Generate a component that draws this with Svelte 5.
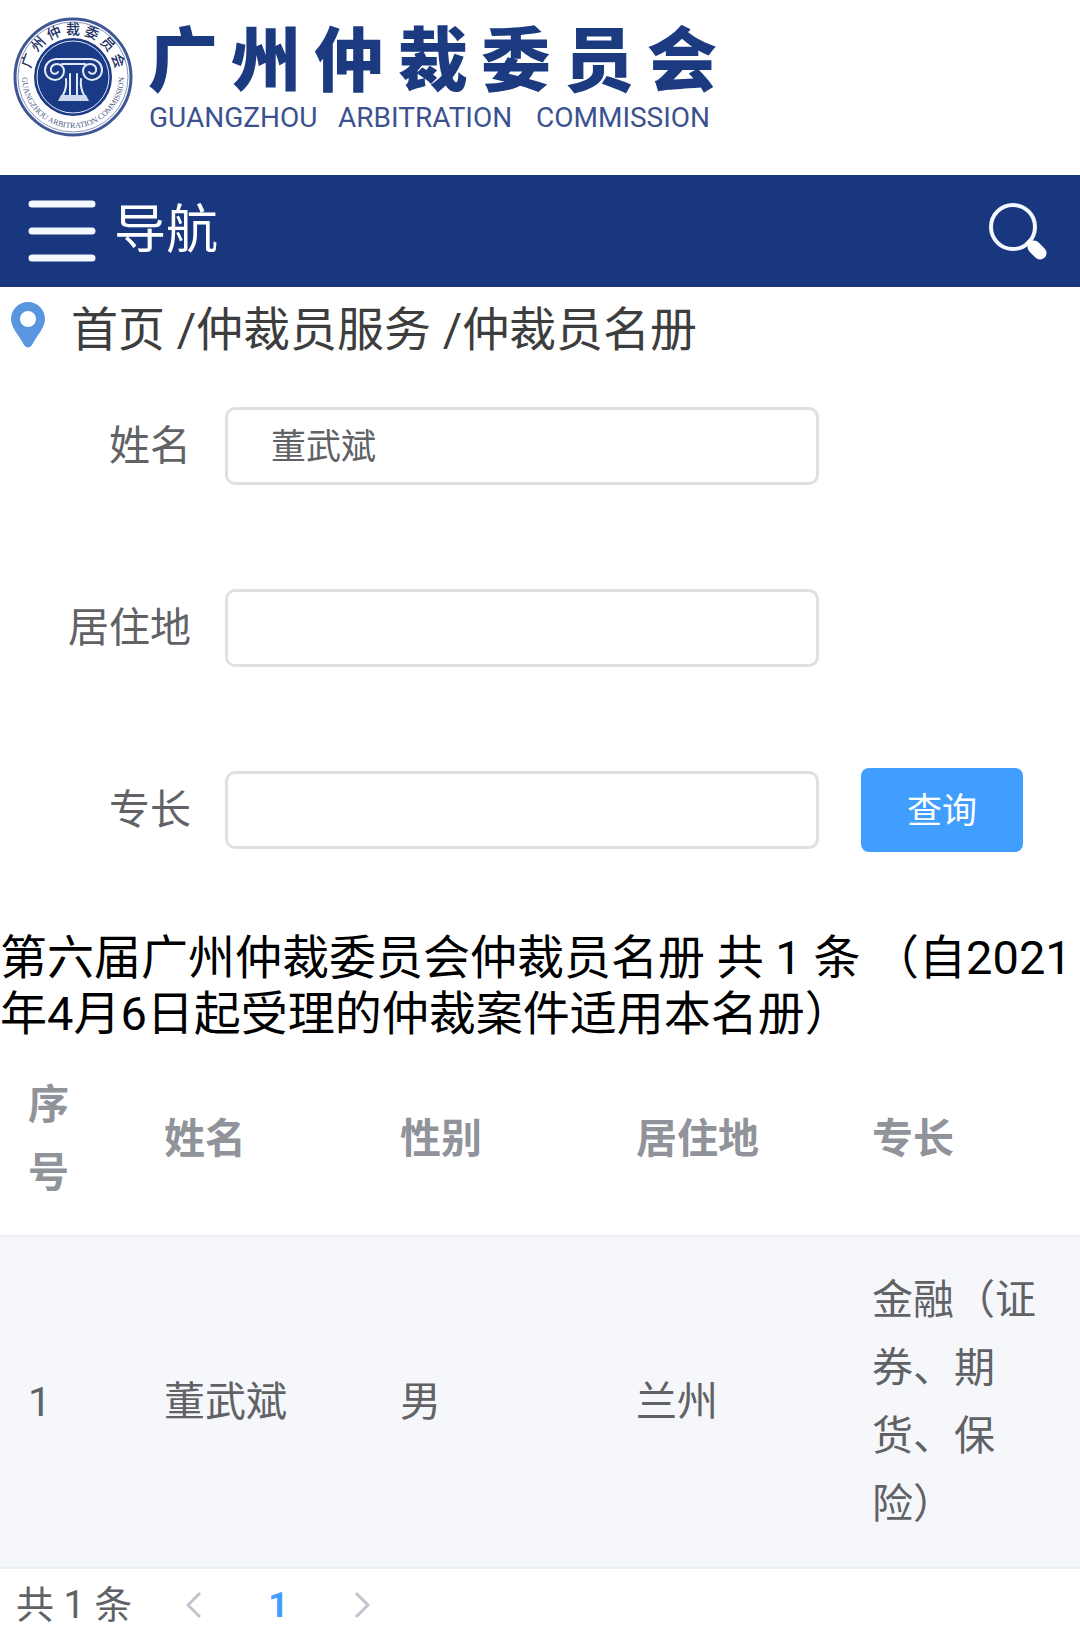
<script lang="ts">
  type Arbitrator = {
    name: string;
    gender: string;
    residence: string;
    specialty: string;
  };

  let name = $state('董武斌');
  let residence = $state('');
  let specialty = $state('');

  const crumbs = ['首页', '仲裁员服务', '仲裁员名册'];
  const columns = ['序号', '姓名', '性别', '居住地', '专长'];
  const arbitrators: Arbitrator[] = [
    { name: '董武斌', gender: '男', residence: '兰州', specialty: '金融（证券、期货、保险）' }
  ];
</script>

<div class="page">
  <header class="site-header">
    <a class="brand" href="#home" aria-label="广州仲裁委员会">
      <svg class="logo" viewBox="0 0 720 144">
        <defs>
          <path id="ring-top" d="M 31.2 87 A 43 43 0 1 1 114.8 87" />
          <path id="ring-bottom" d="M 23 67 A 51 51 0 1 0 123 67" />
        </defs>
        <circle cx="73" cy="77" r="58" fill="#fff" stroke="#3f5795" stroke-width="3" />
        <circle cx="73" cy="77" r="55" fill="none" stroke="#8796c0" stroke-width="1" />
        <circle cx="73" cy="77" r="39" fill="#1b3a85" />
        <circle cx="73" cy="77" r="36" fill="none" stroke="#dfe6f5" stroke-width="1" />
        <text class="ring-cn">
          <textPath href="#ring-top" startOffset="50%" text-anchor="middle">广 州 仲 裁 委 员 会</textPath>
        </text>
        <text class="ring-en">
          <textPath href="#ring-bottom" startOffset="50%" text-anchor="middle">GUANGZHOU ARBITRATION COMMISSION</textPath>
        </text>
        <g fill="none" stroke="#e3eaf7" stroke-width="2" stroke-linecap="round">
          <path d="M 57 59 H 90 C 97 59 102 64 102 70 C 102 76 97 80 92 80 C 87 80 83 76 83 71 C 83 67 86 64 90 64 C 94 64 97 67 96 71 C 95 74 91 75 89 72" />
          <path d="M 90 59 H 57 C 50 59 45 64 45 70 C 45 76 50 80 55 80 C 60 80 64 76 64 71 C 64 67 61 64 57 64 C 53 64 50 67 51 71 C 52 74 56 75 58 72" />
          <path d="M 62 64 H 85" />
          <path d="M 66 79 Q 67 88 63 95 M 70 74 V 95 M 77 74 V 95 M 81 79 Q 80 88 84 95" />
        </g>
        <path d="M 61 95 H 86 L 89 101 H 58 Z" fill="#cfd9ee" />
        <text class="title" x="183 266 349 433 516 599 682" y="86">广州仲裁委员会</text>
        <text class="subtitle" y="127">
          <tspan x="149">GUANGZHOU</tspan>
          <tspan x="338">ARBITRATION</tspan>
          <tspan x="536">COMMISSION</tspan>
        </text>
      </svg>
    </a>
  </header>

  <nav class="nav-bar">
    <button class="menu" type="button">
      <svg width="68" height="62" viewBox="0 0 68 62" aria-hidden="true">
        <path d="M 4 4 H 64 M 4 31 H 64 M 4 58 H 64" stroke="#f4f8ff" stroke-width="7" stroke-linecap="round" />
      </svg>
      <span>导航</span>
    </button>
    <button class="search" type="button" aria-label="搜索">
      <svg width="60" height="62" viewBox="0 0 60 62" fill="none" aria-hidden="true">
        <circle cx="25" cy="27" r="22" stroke="#f4f8ff" stroke-width="4" />
        <path d="M 46 47 L 52 53" stroke="#fff" stroke-width="13" stroke-linecap="round" />
        <path d="M 39 41 L 46 48" stroke="#fff" stroke-width="5" />
      </svg>
    </button>
  </nav>

  <nav class="breadcrumb" aria-label="当前位置">
    <svg width="34" height="46" viewBox="0 0 34 46" aria-hidden="true">
      <path
        fill="#5a96e0"
        fill-rule="evenodd"
        d="M 17 0 C 7 0 0 8 0 17 C 0 26 8 33 13 43 Q 17 48 21 43 C 26 33 34 26 34 17 C 34 8 27 0 17 0 Z M 17 9 A 8 8 0 1 1 17 25 A 8 8 0 1 1 17 9 Z"
      />
    </svg>
    <p>
      {#each crumbs as crumb, i}{i > 0 ? ' /' : ''}<a href="#crumb-{i}">{crumb}</a>{/each}
    </p>
  </nav>

  <form class="filters" onsubmit={(event) => event.preventDefault()}>
    <label for="name">姓名</label>
    <input id="name" type="text" bind:value={name} />
    <label class="row-start" for="residence">居住地</label>
    <input id="residence" type="text" bind:value={residence} />
    <label class="row-start" for="specialty">专长</label>
    <input id="specialty" type="text" bind:value={specialty} />
    <button type="submit">查询</button>
  </form>

  <h1>第六届广州仲裁委员会仲裁员名册 共 {arbitrators.length} 条 （自2021年4月6日起受理的仲裁案件适用本名册）</h1>

  <table>
    <thead>
      <tr>
        {#each columns as column}
          <th scope="col">{column}</th>
        {/each}
      </tr>
    </thead>
    <tbody>
      {#each arbitrators as person, i}
        <tr>
          <td>{i + 1}</td>
          <td>{person.name}</td>
          <td>{person.gender}</td>
          <td>{person.residence}</td>
          <td>{person.specialty}</td>
        </tr>
      {/each}
    </tbody>
  </table>

  <footer class="pagination">
    <span>共 {arbitrators.length} 条</span>
    <button type="button" aria-label="上一页" disabled>
      <svg width="16" height="28" viewBox="0 0 16 28" aria-hidden="true">
        <path d="M 14 2 L 2 14 L 14 26" />
      </svg>
    </button>
    <button class="current" type="button" aria-current="page">1</button>
    <button type="button" aria-label="下一页" disabled>
      <svg width="16" height="28" viewBox="0 0 16 28" aria-hidden="true">
        <path d="M 2 2 L 14 14 L 2 26" />
      </svg>
    </button>
  </footer>
</div>

<style>
  :global(body) {
    margin: 0;
    background: #fff;
  }

  .page {
    color: #606266;
    font-family: Roboto, 'Noto Sans CJK SC', sans-serif;
    font-size: 41px;
  }

  button,
  input {
    box-sizing: border-box;
    font-family: inherit;
  }

  button {
    background: none;
    border: 0;
    color: inherit;
    padding: 0;
  }

  a {
    color: inherit;
    text-decoration: none;
  }

  .site-header {
    padding-bottom: 31px;
  }

  .brand {
    display: block;
    max-width: 720px;
  }

  .logo {
    display: block;
    width: 100%;
  }

  .title {
    fill: #1b3a80;
    font-size: 70px;
    font-weight: 900;
    text-anchor: middle;
  }

  .subtitle {
    fill: #3c5290;
    font-size: 28px;
  }

  .ring-cn {
    fill: #1d2f63;
    font-size: 14px;
    font-weight: 500;
  }

  .ring-en {
    fill: #4d5b88;
    font-family: 'Liberation Serif', serif;
    font-size: 8px;
  }

  .nav-bar {
    align-items: center;
    background: #18377f;
    display: flex;
    height: 112px;
    justify-content: space-between;
    padding: 0 32px 0 28px;
  }

  .menu {
    align-items: center;
    color: #fff;
    display: flex;
    font-size: 52px;
    gap: 18px;
    line-height: 64px;
  }

  .search svg,
  .menu svg,
  .pagination svg {
    display: block;
  }

  .breadcrumb {
    align-items: center;
    color: #3d3d3d;
    display: flex;
    font-size: 47px;
    gap: 26px;
    line-height: 56px;
    padding: 15px 11px 0;
  }

  .breadcrumb svg {
    flex: none;
    padding-bottom: 10px;
  }

  .breadcrumb p {
    margin: 0;
  }

  .filters {
    align-items: center;
    display: grid;
    grid-template-columns: 225px 55% 1fr;
    padding-top: 46px;
    row-gap: 98px;
  }

  .filters label {
    line-height: 84px;
    padding-right: 34px;
    text-align: right;
  }

  .filters .row-start {
    grid-column: 1;
  }

  .filters input {
    background: #fff;
    border: 3px solid #e0e0e2;
    border-radius: 10px;
    color: #606266;
    font-size: 35px;
    height: 78px;
    outline: none;
    padding: 0 43px 6px;
    width: 100%;
  }

  .filters button {
    background: #409eff;
    border-radius: 8px;
    color: #fff;
    font-size: 35px;
    height: 84px;
    justify-self: start;
    margin-left: 42px;
    padding: 0 46px 6px;
  }

  h1 {
    color: #000;
    font-size: 47px;
    font-weight: 400;
    line-height: 56px;
    margin: 78px 0 0;
  }

  table {
    border-collapse: collapse;
    line-height: 68px;
    table-layout: fixed;
    width: 100%;
  }

  th,
  td {
    border-bottom: 2px solid #ebeef2;
    font-weight: 400;
    padding: 29px 28px;
    text-align: left;
  }

  th {
    color: #909399;
    font-weight: 700;
    padding-bottom: 28px;
  }

  th:first-child {
    width: 80px;
  }

  td {
    background: #f5f7fb;
  }

  .pagination {
    align-items: center;
    display: flex;
    font-size: 38px;
    gap: 54px;
    line-height: 56px;
    padding: 8px 16px;
  }

  .pagination path {
    fill: none;
    stroke: #c0c4cc;
    stroke-width: 3;
  }

  .pagination .current {
    color: #409eff;
    font-size: 35px;
    font-weight: 700;
    padding: 0 12px;
  }
</style>
